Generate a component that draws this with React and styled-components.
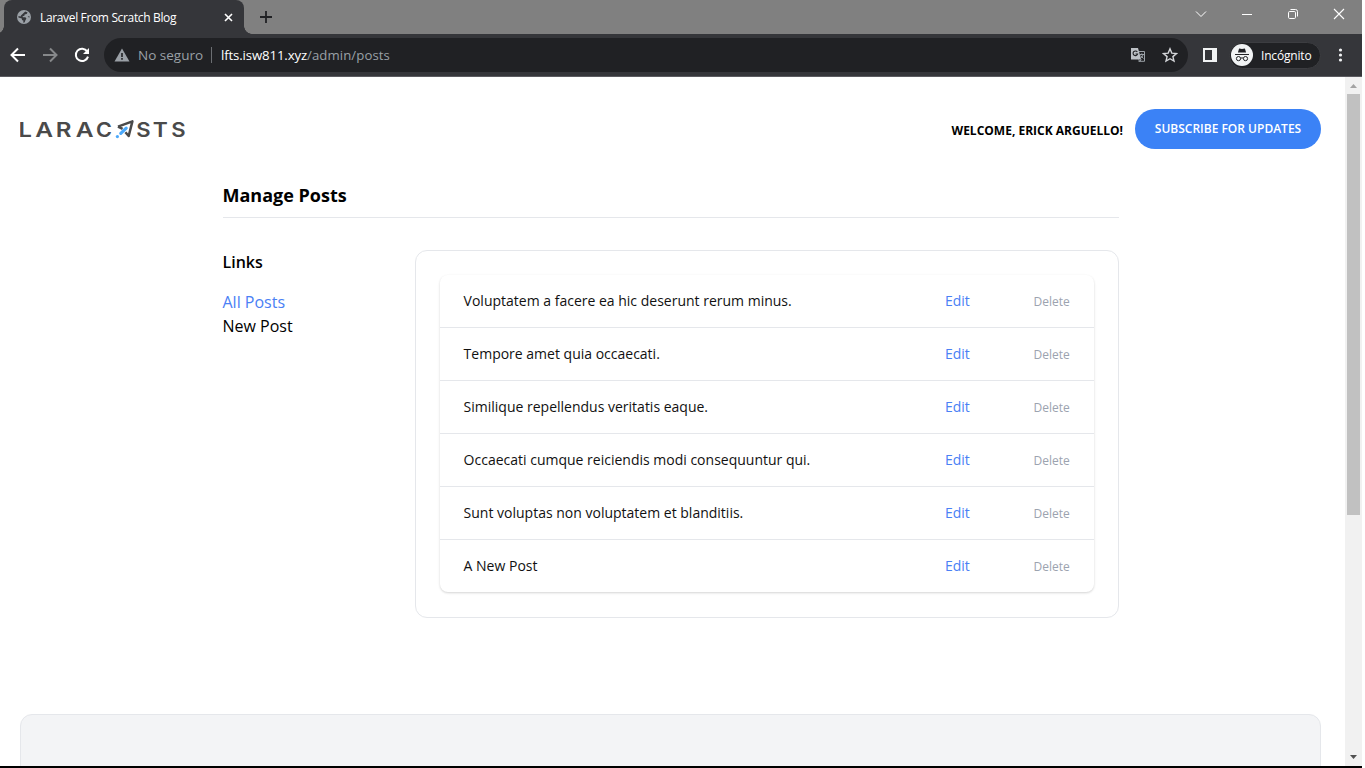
import React from 'react';
import styled, { createGlobalStyle } from 'styled-components';

const Global = createGlobalStyle`
  * { box-sizing: border-box; }
  body { margin: 0; background: #fff; overflow: hidden; font-family: "Open Sans", sans-serif; color: #000; }
  h1, h4, p, ul { margin: 0; padding: 0; }
  ul { list-style: none; }
  svg { display: block; flex: none; }
`;

const Window = styled.div`
  width: 1362px; height: 768px; display: flex; flex-direction: column; overflow: hidden;
  border-bottom: 2px solid #000;
`;
const TabStrip = styled.div`
  height: 34px; flex: none; background: #808080; display: flex; padding-left: 4px;
`;
const Tab = styled.div`
  position: relative; width: 240px; height: 34px; background: #35363a; border-radius: 8px 8px 0 0;
  display: flex; align-items: center; padding: 0 11.5px 0 12px; color: #fff;
  font: 12px "Open Sans", sans-serif;
  &::before, &::after {
    content: ""; position: absolute; bottom: 0; width: 8px; height: 8px;
  }
  &::before { left: -8px; background: radial-gradient(circle at 0 0, transparent 7.5px, #35363a 8px); }
  &::after { right: -8px; background: radial-gradient(circle at 100% 0, transparent 7.5px, #35363a 8px); }
`;
const TabTitle = styled.span`
  margin-left: 8px; flex: 1; white-space: nowrap; letter-spacing: -0.35px;
`;
const NewTab = styled.div`margin: 11px 0 0 16px;`;
const Controls = styled.div`
  margin-left: auto; display: flex; gap: 34px; padding: 8px 17px 0 0;
`;
const Toolbar = styled.div`
  height: 43px; flex: none; background: #35363a; border-bottom: 1px solid #5b5b60;
  display: flex; align-items: center; padding-left: 10px;
`;
const NavIcons = styled.div`display: flex; gap: 16px; width: 94px; flex: none;`;
const Address = styled.div`
  width: 1084px; flex: none; height: 34px; border-radius: 17px; background: #202124; display: flex; align-items: center;
  padding: 0 10px; color: #9aa0a6; font: 14px "Open Sans", sans-serif; white-space: nowrap;
`;
const Insecure = styled.span`margin-left: 8px; width: 65px; font-size: 13.5px;`;
const Divider = styled.i`width: 1px; height: 16px; background: #6b6e72; margin: 0 9px 0 8px;`;
const Url = styled.span`
  flex: 1; font-size: 13.2px; letter-spacing: 0.08px;
  b { font-weight: 400; color: #fff; letter-spacing: -0.12px; }
`;
const AddressIcons = styled.div`display: flex; gap: 16px; align-items: center;`;
const Incognito = styled.div`
  margin-left: 12px; width: 92px; flex: none; height: 27px; border-radius: 14px; background: #202124; border: 1px solid #3c3d41;
  display: flex; align-items: center; padding-left: 1px; gap: 8px; color: #fff; font: 12px "Open Sans", sans-serif;
  letter-spacing: -0.18px;
`;
const Viewport = styled.div`flex: 1; min-height: 0; display: flex;`;
const Page = styled.div`flex: 1; padding: 32px 24px 0 20px; overflow: hidden;`;
const Header = styled.header`display: flex; align-items: center; justify-content: space-between; height: 40px;`;
const Account = styled.div`display: flex; align-items: center; font-size: 12px; white-space: nowrap;`;
const Welcome = styled.span`font-weight: 700; margin: 3px 12px 0 0; line-height: 16px;`;
const Subscribe = styled.a`
  width: 186px; height: 40px; border-radius: 20px; background: #3b82f6; color: #fff; font-weight: 600;
  text-align: center; line-height: 39px;
`;
const Main = styled.main`width: 896px; margin: 32px auto 0;`;
const Title = styled.h1`
  font-size: 18px; line-height: 28px; font-weight: 700; height: 37px; border-bottom: 1px solid #e5e7eb; margin-bottom: 32px;
`;
const Columns = styled.div`display: flex;`;
const Side = styled.aside`
  flex: none; width: 192.6px; font-size: 16px; line-height: 24px;
  h4 { font-weight: 600; margin-bottom: 16px; }
`;
const SideLink = styled.li`color: ${p => (p.$active ? '#4a80f5' : '#000')};`;
const Panel = styled.section`flex: 1; border: 1px solid #e5e7eb; border-radius: 12px; padding: 24px; height: 368px;`;
const Table = styled.div`
  border-radius: 8px; overflow: hidden; box-shadow: 0 1px 3px rgba(0,0,0,.1), 0 1px 2px rgba(0,0,0,.08);
`;
const Row = styled.div`
  height: 53px; display: flex; align-items: center; padding: 0 24px 0 23.5px; font-size: 14px; line-height: 20px;
  & + & { border-top: 1px solid #e5e7eb; }
  &:first-child { height: 52px; }
`;
const PostTitle = styled.span`width: 481.4px; color: #111;`;
const Edit = styled.a`width: 88.5px; color: #4a80f5;`;
const Delete = styled.button`
  border: 0; padding: 0; margin-top: 2px; background: none; color: #9ca3af; font: 12px/16px "Open Sans", sans-serif;
`;
const Footer = styled.footer`
  margin-top: 96px; height: 300px; background: #f3f4f6; border: 1px solid #e5e7eb; border-radius: 12px;
`;
const Scrollbar = styled.div`
  width: 17px; background: #f1f1f1; display: flex; flex-direction: column; align-items: center;
  padding: 7px 0;
`;
const Thumb = styled.div`width: 13px; height: 421px; margin: 6px 0 auto; background: #c1c1c1;`;

const Globe = () => (
  <svg width="16" height="16" viewBox="0 0 16 16">
    <circle cx="8" cy="8" r="7" fill="#9aa0a6" />
    <path d="M9.2 2.4 11.6 3.6 10.6 5 8.6 5.4 8.4 6.8 6.6 7.2 6.8 8.2 9.4 8.2 10.4 9.6 9.4 11.2 8.6 13.6 7 13.6 7.6 11.8 6 11 5.8 9.6 2.4 8.4 2.5 7 4.6 7.6 5 6.4Z M11.6 7.4 13.5 7.2 13.3 8.8Z" fill="#35363a" />
  </svg>
);
const Arrow = ({ color, right }) => (
  <svg width="16" height="16" viewBox="0 0 16 16" fill="none" stroke={color} strokeWidth="2">
    <path d={right ? 'M1 8h13M8 1.5 14.5 8 8 14.5' : 'M15 8H2M8 1.5 1.5 8 8 14.5'} />
  </svg>
);

const letters = [
  ['L', -1.4, 1.16], ['A', 15.2, 1.2], ['R', 35.8, 1.18], ['A', 55.8, 1.2], ['C', 76, 1.06],
  ['S', 116.2, 1.08], ['T', 132.8, 1.12], ['S', 151.2, 1.08],
];
const Logo = () => (
  <svg width="168" height="24" viewBox="0 0 168 24">
    <g fill="#4a4a4a" fontFamily="Inter, sans-serif" fontWeight="600" fontSize="20.4">
      {letters.map(([char, x, stretch], i) => (
        <text key={i} transform={`translate(${x} 20) scale(${stretch} 1)`}>{char}</text>
      ))}
    </g>
    <path d="M98 9.6 112.4 4.4 108.7 19 105.4 15.2M98 9.6l4.6 2.2" fill="none" stroke="#4a4a4a" strokeWidth="2.5" strokeLinejoin="round" />
    <path d="M100.8 16.4 106.2 11.2" stroke="#4ba9fb" strokeWidth="3.2" strokeLinecap="round" />
    <circle cx="97.4" cy="19.6" r="1.6" fill="#4ba9fb" />
  </svg>
);

const posts = [
  'Voluptatem a facere ea hic deserunt rerum minus.',
  'Tempore amet quia occaecati.',
  'Similique repellendus veritatis eaque.',
  'Occaecati cumque reiciendis modi consequuntur qui.',
  'Sunt voluptas non voluptatem et blanditiis.',
  'A New Post',
];

export default function App() {
  return (
    <Window>
      <Global />
      <TabStrip>
        <Tab>
          <Globe />
          <TabTitle>Laravel From Scratch Blog</TabTitle>
          <svg width="9" height="9" viewBox="0 0 9 9" stroke="#fff" strokeWidth="1.6"><path d="m1 1 7 7M8 1 1 8" /></svg>
        </Tab>
        <NewTab><svg width="12" height="12" viewBox="0 0 12 12" stroke="#202124" strokeWidth="1.8"><path d="M6 0v12M0 6h12" /></svg></NewTab>
        <Controls>
          <svg width="12" height="12" viewBox="0 0 12 12" fill="none" stroke="#fff"><path d="m1 3.5 5 5 5-5" /></svg>
          <svg width="12" height="12" viewBox="0 0 12 12" stroke="#fff"><path d="M1 6.5h10" /></svg>
          <svg width="12" height="12" viewBox="0 0 12 12" fill="none" stroke="#fff"><rect x="1.5" y="3.5" width="7" height="7" rx="1.2" /><path d="M3.5 1.5h5a2 2 0 0 1 2 2v5" /></svg>
          <svg width="12" height="12" viewBox="0 0 12 12" stroke="#fff" strokeWidth="1.1"><path d="m1 1 10 10M11 1 1 11" /></svg>
        </Controls>
      </TabStrip>
      <Toolbar>
        <NavIcons>
          <Arrow color="#fff" />
          <Arrow color="#86888a" right />
          <svg width="16" height="16" viewBox="0 0 16 16"><path d="M13.2 4.4A6.2 6.2 0 1 0 14 9.6" fill="none" stroke="#fff" strokeWidth="2" /><path d="M15 1v6H9z" fill="#fff" /></svg>
        </NavIcons>
        <Address>
          <svg width="16" height="16" viewBox="0 0 16 16"><path d="M8 1.5 15.5 14.5H.5z" fill="#9aa0a6" /><path d="M7.2 6h1.6v4H7.2zM7.2 11h1.6v1.7H7.2z" fill="#202124" /></svg>
          <Insecure>No seguro</Insecure>
          <Divider />
          <Url><b>lfts.isw811.xyz</b>/admin/posts</Url>
          <AddressIcons>
            <svg width="16" height="16" viewBox="0 0 16 16" fill="none">
              <path d="M7 4.5h7.5v9.8H8.5" stroke="#9aa0a6" />
              <path d="M1 1h7l3.2 11.4H1z" fill="#bdc1c6" />
              <path d="M7.3 5A2.3 2.3 0 1 0 7.6 7H5.5" stroke="#202124" strokeWidth="1.1" />
              <path d="M9.5 7.5h4.5M11.8 6.3v1.2M13 7.5c-.4 2-1.6 3.2-2.7 4M10.7 8.5l2.7 3M8.4 12.4l1.4 2 1.4-2" stroke="#9aa0a6" />
            </svg>
            <svg width="16" height="16" viewBox="0 0 16 16" fill="none" stroke="#d4d6d9" strokeWidth="1.4"><path d="m8 1.8 1.8 4.3 4.7.4-3.6 3.1L12 14.1l-4-2.4-4 2.4 1.1-4.5-3.6-3.1 4.7-.4z" /></svg>
          </AddressIcons>
        </Address>
        <svg width="29" height="14" viewBox="0 0 29 14"><path d="M15 0h14v14H15zM17 2v10h7V2z" fill="#f1f3f4" fillRule="evenodd" /></svg>
        <Incognito>
          <svg width="22" height="22" viewBox="0 0 22 22" fill="none" stroke="#202124">
            <circle cx="11" cy="11" r="11" fill="#f1f3f4" stroke="none" />
            <path d="M8.1 4.4 11 5l2.9-.6 1.2 4.1H6.9z" fill="#202124" stroke="none" />
            <path d="M4 10.5h14" />
            <circle cx="7.5" cy="14.6" r="2.1" /><circle cx="14.5" cy="14.6" r="2.1" /><path d="M9.7 14.2q1.3-.7 2.6 0" />
          </svg>
          Incógnito
        </Incognito>
        <svg width="41" height="16" viewBox="0 0 41 16" fill="#f1f3f4"><circle cx="19.5" cy="3" r="1.6" /><circle cx="19.5" cy="8" r="1.6" /><circle cx="19.5" cy="13" r="1.6" /></svg>
      </Toolbar>
      <Viewport>
        <Page>
          <Header>
            <Logo />
            <Account>
              <Welcome>WELCOME, ERICK ARGUELLO!</Welcome>
              <Subscribe>SUBSCRIBE FOR UPDATES</Subscribe>
            </Account>
          </Header>
          <Main>
            <Title>Manage Posts</Title>
            <Columns>
              <Side>
                <h4>Links</h4>
                <ul>
                  <SideLink $active>All Posts</SideLink>
                  <SideLink>New Post</SideLink>
                </ul>
              </Side>
              <Panel>
                <Table>
                  {posts.map(post => (
                    <Row key={post}>
                      <PostTitle>{post}</PostTitle>
                      <Edit>Edit</Edit>
                      <Delete>Delete</Delete>
                    </Row>
                  ))}
                </Table>
              </Panel>
            </Columns>
          </Main>
          <Footer />
        </Page>
        <Scrollbar>
          <svg width="7" height="4" viewBox="0 0 7 4" fill="#a3a3a3"><path d="M3.5 0 7 4H0z" /></svg>
          <Thumb />
          <svg width="7" height="4" viewBox="0 0 7 4" fill="#505050"><path d="M3.5 4 7 0H0z" /></svg>
        </Scrollbar>
      </Viewport>
    </Window>
  );
}
